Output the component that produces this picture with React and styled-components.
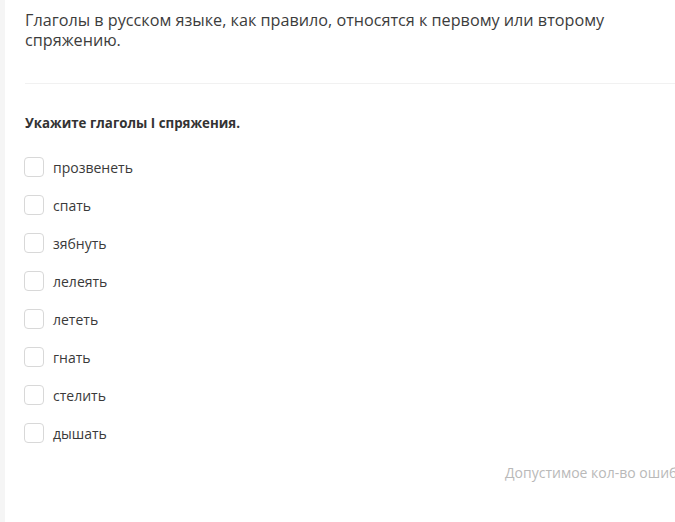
import React from 'react';
import styled, { createGlobalStyle } from 'styled-components';

const GlobalStyle = createGlobalStyle`
  html, body {
    margin: 0;
    padding: 0;
    background: #f5f5f5;
    font-family: "Open Sans", "Noto Sans", sans-serif;
    overflow: hidden;
  }
`;

const Page = styled.div`
  width: 675px;
  height: 522px;
  padding-left: 5px;
  box-sizing: border-box;
  background: #f5f5f5;
  overflow: hidden;
`;

const Card = styled.div`
  background: #fff;
  height: 100%;
  padding: 10px 0 0 20px;
  box-sizing: border-box;
  display: flex;
  flex-direction: column;
`;

const Intro = styled.p`
  margin: 0;
  font-size: 16.2px;
  line-height: 20px;
  color: #3c3c3c;
`;

const Divider = styled.hr`
  border: none;
  border-top: 1px solid #f1f1f1;
  margin: 33px 0 0;
`;

const Question = styled.h3`
  margin: 30px 0 0;
  font-size: 13.3px;
  font-weight: 700;
  color: #333;
  line-height: 18px;
`;

const Options = styled.ul`
  list-style: none;
  margin: 25px 0 0;
  padding: 0;
  display: flex;
  flex-direction: column;
  gap: 18px;
`;

const Option = styled.li`
  display: flex;
  align-items: center;
  gap: 9px;
  height: 20px;
  margin-left: -1px;
`;

const Box = styled.span`
  width: 18px;
  height: 18px;
  border: 1px solid #d8d8d8;
  border-radius: 4px;
  background: #fff;
  flex-shrink: 0;
`;

const Label = styled.span`
  font-size: 14px;
  color: #3a3a3a;
`;

const Footer = styled.div`
  margin-top: 20px;
  padding-left: 480px;
  white-space: nowrap;
  font-size: 14px;
  color: #b9b9b9;
`;

const verbs = ['прозвенеть', 'спать', 'зябнуть', 'лелеять', 'лететь', 'гнать', 'стелить', 'дышать'];

export default function App() {
  return (
    <Page>
      <GlobalStyle />
      <Card>
        <Intro>
          Глаголы в русском языке, как правило, относятся к первому или второму спряжению.
        </Intro>
        <Divider />
        <Question>Укажите глаголы I спряжения.</Question>
        <Options>
          {verbs.map((v) => (
            <Option key={v}>
              <Box />
              <Label>{v}</Label>
            </Option>
          ))}
        </Options>
        <Footer>Допустимое кол-во ошибок</Footer>
      </Card>
    </Page>
  );
}
